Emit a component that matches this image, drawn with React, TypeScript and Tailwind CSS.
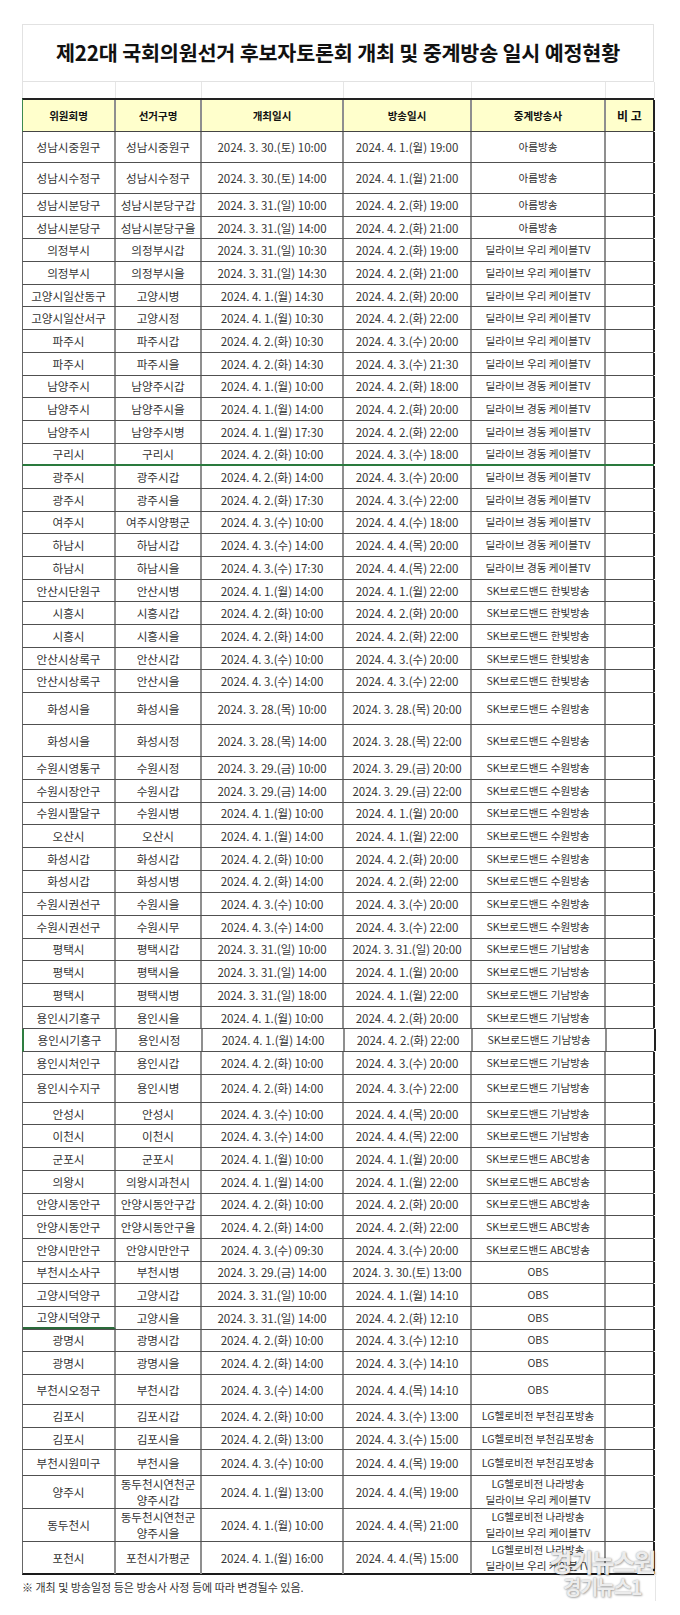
import React from "react";

const cols = "grid grid-cols-[93px_86px_142px_128px_134px_49px]";

// row height keys -> full class names
const heights: Record<string, string> = {
  n: "h-[22.7px]",
  a: "h-[31px]",
  b: "h-[32px]",
  c: "h-[28px]",
  d: "h-[30px]",
  e: "h-[26px]",
  f: "h-[33px]",
};

type Row = {
  area: string;
  district: string | string[];
  start: string;
  air: string;
  station: string | string[];
  h?: string;
  mark?: "bottom" | "left" | "cell";
};

const rows: Row[] = [
  { area: "성남시중원구", district: "성남시중원구", start: "2024. 3. 30.(토) 10:00", air: "2024. 4. 1.(월) 19:00", station: "아름방송", h: "a" },
  { area: "성남시수정구", district: "성남시수정구", start: "2024. 3. 30.(토) 14:00", air: "2024. 4. 1.(월) 21:00", station: "아름방송", h: "a" },
  { area: "성남시분당구", district: "성남시분당구갑", start: "2024. 3. 31.(일) 10:00", air: "2024. 4. 2.(화) 19:00", station: "아름방송" },
  { area: "성남시분당구", district: "성남시분당구을", start: "2024. 3. 31.(일) 14:00", air: "2024. 4. 2.(화) 21:00", station: "아름방송" },
  { area: "의정부시", district: "의정부시갑", start: "2024. 3. 31.(일) 10:30", air: "2024. 4. 2.(화) 19:00", station: "딜라이브 우리 케이블TV" },
  { area: "의정부시", district: "의정부시을", start: "2024. 3. 31.(일) 14:30", air: "2024. 4. 2.(화) 21:00", station: "딜라이브 우리 케이블TV" },
  { area: "고양시일산동구", district: "고양시병", start: "2024. 4. 1.(월) 14:30", air: "2024. 4. 2.(화) 20:00", station: "딜라이브 우리 케이블TV" },
  { area: "고양시일산서구", district: "고양시정", start: "2024. 4. 1.(월) 10:30", air: "2024. 4. 2.(화) 22:00", station: "딜라이브 우리 케이블TV" },
  { area: "파주시", district: "파주시갑", start: "2024. 4. 2.(화) 10:30", air: "2024. 4. 3.(수) 20:00", station: "딜라이브 우리 케이블TV" },
  { area: "파주시", district: "파주시을", start: "2024. 4. 2.(화) 14:30", air: "2024. 4. 3.(수) 21:30", station: "딜라이브 우리 케이블TV" },
  { area: "남양주시", district: "남양주시갑", start: "2024. 4. 1.(월) 10:00", air: "2024. 4. 2.(화) 18:00", station: "딜라이브 경동 케이블TV" },
  { area: "남양주시", district: "남양주시을", start: "2024. 4. 1.(월) 14:00", air: "2024. 4. 2.(화) 20:00", station: "딜라이브 경동 케이블TV" },
  { area: "남양주시", district: "남양주시병", start: "2024. 4. 1.(월) 17:30", air: "2024. 4. 2.(화) 22:00", station: "딜라이브 경동 케이블TV" },
  { area: "구리시", district: "구리시", start: "2024. 4. 2.(화) 10:00", air: "2024. 4. 3.(수) 18:00", station: "딜라이브 경동 케이블TV", mark: "bottom" },
  { area: "광주시", district: "광주시갑", start: "2024. 4. 2.(화) 14:00", air: "2024. 4. 3.(수) 20:00", station: "딜라이브 경동 케이블TV" },
  { area: "광주시", district: "광주시을", start: "2024. 4. 2.(화) 17:30", air: "2024. 4. 3.(수) 22:00", station: "딜라이브 경동 케이블TV" },
  { area: "여주시", district: "여주시양평군", start: "2024. 4. 3.(수) 10:00", air: "2024. 4. 4.(수) 18:00", station: "딜라이브 경동 케이블TV" },
  { area: "하남시", district: "하남시갑", start: "2024. 4. 3.(수) 14:00", air: "2024. 4. 4.(목) 20:00", station: "딜라이브 경동 케이블TV" },
  { area: "하남시", district: "하남시을", start: "2024. 4. 3.(수) 17:30", air: "2024. 4. 4.(목) 22:00", station: "딜라이브 경동 케이블TV" },
  { area: "안산시단원구", district: "안산시병", start: "2024. 4. 1.(월) 14:00", air: "2024. 4. 1.(월) 22:00", station: "SK브로드밴드 한빛방송" },
  { area: "시흥시", district: "시흥시갑", start: "2024. 4. 2.(화) 10:00", air: "2024. 4. 2.(화) 20:00", station: "SK브로드밴드 한빛방송" },
  { area: "시흥시", district: "시흥시을", start: "2024. 4. 2.(화) 14:00", air: "2024. 4. 2.(화) 22:00", station: "SK브로드밴드 한빛방송" },
  { area: "안산시상록구", district: "안산시갑", start: "2024. 4. 3.(수) 10:00", air: "2024. 4. 3.(수) 20:00", station: "SK브로드밴드 한빛방송" },
  { area: "안산시상록구", district: "안산시을", start: "2024. 4. 3.(수) 14:00", air: "2024. 4. 3.(수) 22:00", station: "SK브로드밴드 한빛방송" },
  { area: "화성시을", district: "화성시을", start: "2024. 3. 28.(목) 10:00", air: "2024. 3. 28.(목) 20:00", station: "SK브로드밴드 수원방송", h: "b" },
  { area: "화성시을", district: "화성시정", start: "2024. 3. 28.(목) 14:00", air: "2024. 3. 28.(목) 22:00", station: "SK브로드밴드 수원방송", h: "b" },
  { area: "수원시영통구", district: "수원시정", start: "2024. 3. 29.(금) 10:00", air: "2024. 3. 29.(금) 20:00", station: "SK브로드밴드 수원방송" },
  { area: "수원시장안구", district: "수원시갑", start: "2024. 3. 29.(금) 14:00", air: "2024. 3. 29.(금) 22:00", station: "SK브로드밴드 수원방송" },
  { area: "수원시팔달구", district: "수원시병", start: "2024. 4. 1.(월) 10:00", air: "2024. 4. 1.(월) 20:00", station: "SK브로드밴드 수원방송" },
  { area: "오산시", district: "오산시", start: "2024. 4. 1.(월) 14:00", air: "2024. 4. 1.(월) 22:00", station: "SK브로드밴드 수원방송" },
  { area: "화성시갑", district: "화성시갑", start: "2024. 4. 2.(화) 10:00", air: "2024. 4. 2.(화) 20:00", station: "SK브로드밴드 수원방송" },
  { area: "화성시갑", district: "화성시병", start: "2024. 4. 2.(화) 14:00", air: "2024. 4. 2.(화) 22:00", station: "SK브로드밴드 수원방송" },
  { area: "수원시권선구", district: "수원시을", start: "2024. 4. 3.(수) 10:00", air: "2024. 4. 3.(수) 20:00", station: "SK브로드밴드 수원방송" },
  { area: "수원시권선구", district: "수원시무", start: "2024. 4. 3.(수) 14:00", air: "2024. 4. 3.(수) 22:00", station: "SK브로드밴드 수원방송" },
  { area: "평택시", district: "평택시갑", start: "2024. 3. 31.(일) 10:00", air: "2024. 3. 31.(일) 20:00", station: "SK브로드밴드 기남방송" },
  { area: "평택시", district: "평택시을", start: "2024. 3. 31.(일) 14:00", air: "2024. 4. 1.(월) 20:00", station: "SK브로드밴드 기남방송" },
  { area: "평택시", district: "평택시병", start: "2024. 3. 31.(일) 18:00", air: "2024. 4. 1.(월) 22:00", station: "SK브로드밴드 기남방송" },
  { area: "용인시기흥구", district: "용인시을", start: "2024. 4. 1.(월) 10:00", air: "2024. 4. 2.(화) 20:00", station: "SK브로드밴드 기남방송" },
  { area: "용인시기흥구", district: "용인시정", start: "2024. 4. 1.(월) 14:00", air: "2024. 4. 2.(화) 22:00", station: "SK브로드밴드 기남방송", mark: "left" },
  { area: "용인시처인구", district: "용인시갑", start: "2024. 4. 2.(화) 10:00", air: "2024. 4. 3.(수) 20:00", station: "SK브로드밴드 기남방송" },
  { area: "용인시수지구", district: "용인시병", start: "2024. 4. 2.(화) 14:00", air: "2024. 4. 3.(수) 22:00", station: "SK브로드밴드 기남방송", h: "c" },
  { area: "안성시", district: "안성시", start: "2024. 4. 3.(수) 10:00", air: "2024. 4. 4.(목) 20:00", station: "SK브로드밴드 기남방송" },
  { area: "이천시", district: "이천시", start: "2024. 4. 3.(수) 14:00", air: "2024. 4. 4.(목) 22:00", station: "SK브로드밴드 기남방송" },
  { area: "군포시", district: "군포시", start: "2024. 4. 1.(월) 10:00", air: "2024. 4. 1.(월) 20:00", station: "SK브로드밴드 ABC방송" },
  { area: "의왕시", district: "의왕시과천시", start: "2024. 4. 1.(월) 14:00", air: "2024. 4. 1.(월) 22:00", station: "SK브로드밴드 ABC방송" },
  { area: "안양시동안구", district: "안양시동안구갑", start: "2024. 4. 2.(화) 10:00", air: "2024. 4. 2.(화) 20:00", station: "SK브로드밴드 ABC방송" },
  { area: "안양시동안구", district: "안양시동안구을", start: "2024. 4. 2.(화) 14:00", air: "2024. 4. 2.(화) 22:00", station: "SK브로드밴드 ABC방송" },
  { area: "안양시만안구", district: "안양시만안구", start: "2024. 4. 3.(수) 09:30", air: "2024. 4. 3.(수) 20:00", station: "SK브로드밴드 ABC방송" },
  { area: "부천시소사구", district: "부천시병", start: "2024. 3. 29.(금) 14:00", air: "2024. 3. 30.(토) 13:00", station: "OBS" },
  { area: "고양시덕양구", district: "고양시갑", start: "2024. 3. 31.(일) 10:00", air: "2024. 4. 1.(월) 14:10", station: "OBS" },
  { area: "고양시덕양구", district: "고양시을", start: "2024. 3. 31.(일) 14:00", air: "2024. 4. 2.(화) 12:10", station: "OBS", mark: "cell" },
  { area: "광명시", district: "광명시갑", start: "2024. 4. 2.(화) 10:00", air: "2024. 4. 3.(수) 12:10", station: "OBS" },
  { area: "광명시", district: "광명시을", start: "2024. 4. 2.(화) 14:00", air: "2024. 4. 3.(수) 14:10", station: "OBS" },
  { area: "부천시오정구", district: "부천시갑", start: "2024. 4. 3.(수) 14:00", air: "2024. 4. 4.(목) 14:10", station: "OBS", h: "d" },
  { area: "김포시", district: "김포시갑", start: "2024. 4. 2.(화) 10:00", air: "2024. 4. 3.(수) 13:00", station: "LG헬로비전 부천김포방송" },
  { area: "김포시", district: "김포시을", start: "2024. 4. 2.(화) 13:00", air: "2024. 4. 3.(수) 15:00", station: "LG헬로비전 부천김포방송" },
  { area: "부천시원미구", district: "부천시을", start: "2024. 4. 3.(수) 10:00", air: "2024. 4. 4.(목) 19:00", station: "LG헬로비전 부천김포방송", h: "e" },
  { area: "양주시", district: ["동두천시연천군", "양주시갑"], start: "2024. 4. 1.(월) 13:00", air: "2024. 4. 4.(목) 19:00", station: ["LG헬로비전 나라방송", "딜라이브 우리 케이블TV"], h: "f" },
  { area: "동두천시", district: ["동두천시연천군", "양주시을"], start: "2024. 4. 1.(월) 10:00", air: "2024. 4. 4.(목) 21:00", station: ["LG헬로비전 나라방송", "딜라이브 우리 케이블TV"], h: "f" },
  { area: "포천시", district: "포천시가평군", start: "2024. 4. 1.(월) 16:00", air: "2024. 4. 4.(목) 15:00", station: ["LG헬로비전 나라방송", "딜라이브 우리 케이블TV"], h: "f" },
];

const cell = "flex flex-col items-center justify-center border-r-2 border-[#8f8f8f] text-center leading-[16px]";

function Lines({ v }: { v: string | string[] }) {
  if (typeof v === "string") return <span className="whitespace-nowrap">{v}</span>;
  return (
    <>
      {v.map((t) => (
        <span key={t} className="whitespace-nowrap">
          {t}
        </span>
      ))}
    </>
  );
}

export default function App() {
  return (
    <div className="relative h-[1615px] w-[680px] overflow-hidden bg-white pl-[22px] pt-[24px] font-['Noto_Sans_CJK_KR',sans-serif] text-[#333]">
      {/* title block */}
      <div className="flex h-[58px] w-[632px] items-center justify-center border border-[#e2e2e2] text-[20.7px] font-bold tracking-[-0.2px] text-[#111]">
        제22대 국회의원선거 후보자토론회 개최 및 중계방송 일시 예정현황
      </div>
      <div className={`${cols} h-[16px] w-[632px] border-l border-[#e2e2e2]`}>
        <div className="border-r border-[#e6e6e6]" />
        <div className="border-r border-[#e6e6e6]" />
        <div className="border-r border-[#e6e6e6]" />
        <div className="border-r border-[#e6e6e6]" />
        <div className="border-r border-[#e6e6e6]" />
        <div className="border-r border-[#e6e6e6]" />
      </div>

      {/* table */}
      <div className="w-[632px]">
        <div className={`${cols} h-[34px] border-l border-t-2 border-b border-l-[#3c8a4f] border-t-[#222] border-b-[#444] bg-[#ffffcc] text-[10.5px] font-bold text-[#111]`}>
          <div className={cell}>위원회명</div>
          <div className={cell}>선거구명</div>
          <div className={cell}>개최일시</div>
          <div className={cell}>방송일시</div>
          <div className={cell}>중계방송사</div>
          <div className="flex items-center justify-center border-r-2 border-[#222] text-[12px]">비 고</div>
        </div>

        {rows.map((r, i) => {
          const last = i === rows.length - 1;
          return (
            <div
              key={i}
              className={`${cols} ${heights[r.h ?? "n"]} border-l ${
                r.mark === "left" ? "border-l-2 border-l-[#2e7d40]" : "border-l-[#666]"
              } ${
                r.mark === "bottom"
                  ? "border-b-2 border-b-[#2a7a3e]"
                  : last
                    ? "border-b-2 border-b-[#1a1a1a]"
                    : "border-b border-b-[#505050]"
              }`}
            >
              <div className={`${cell} text-[11.6px] ${r.mark === "cell" ? "border-b-2 border-b-[#2a6a3a]" : ""}`}>
                <Lines v={r.area} />
              </div>
              <div className={`${cell} text-[11.6px]`}>
                <Lines v={r.district} />
              </div>
              <div className={`${cell} text-[11.5px]`}>{r.start}</div>
              <div className={`${cell} text-[11.5px]`}>{r.air}</div>
              <div className={`${cell} text-[10.6px]`}>
                <Lines v={r.station} />
              </div>
              <div className="border-r-2 border-[#222]" />
            </div>
          );
        })}
      </div>

      <p className="pt-[5px] text-[11px] leading-[14px] text-[#333]">
        ※ 개최 및 방송일정 등은 방송사 사정 등에 따라 변경될수 있음.
      </p>

      {/* watermark */}
      <div className="absolute left-[537px] top-[1546px] flex w-[130px] flex-col items-center text-[#ececec] [text-shadow:0_0_2px_rgba(0,0,0,0.35),1px_1px_2px_rgba(0,0,0,0.25)]">
        <span className="text-[25px] font-bold leading-[30px] tracking-[-2px]">경기뉴스원</span>
        <span className="text-[20px] font-bold leading-[22px] tracking-[-1.5px]">경기뉴스1</span>
      </div>
      <div className="absolute left-[655px] top-[1576px] h-[25px] w-px bg-[#e6e6e6]" />
    </div>
  );
}
